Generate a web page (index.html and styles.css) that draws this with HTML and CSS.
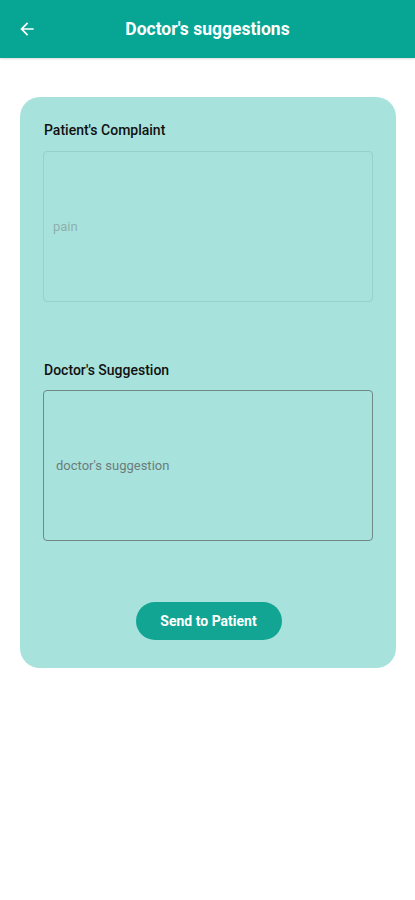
FILE: index.html
```html
<!DOCTYPE html>
<html lang="en">
<head>
    <meta charset="UTF-8">
    <meta name="viewport" content="width=device-width, initial-scale=1.0">
    <title>Doctor's suggestions</title>
    <link rel="stylesheet" href="styles.css">
</head>
<body>
    <header class="app-bar">
        <button class="back-btn" aria-label="Back">
            <svg width="20" height="20" viewBox="0 0 24 24"><path d="M20 11H7.83l5.59-5.59L12 4l-8 8 8 8 1.41-1.41L7.83 13H20v-2z" fill="#fff"/></svg>
        </button>
        <h1>Doctor's suggestions</h1>
    </header>
    <main>
        <section class="card">
            <h2>Patient's Complaint</h2>
            <div class="field field-disabled">pain</div>

            <h2 class="second">Doctor's Suggestion</h2>
            <textarea class="field field-input" placeholder="doctor's suggestion"></textarea>

            <div class="button-container">
                <button class="send-btn">Send to Patient</button>
            </div>
        </section>
    </main>
</body>
</html>
```

FILE: styles.css
```css
body {
    font-family: Roboto, "Noto Sans", sans-serif;
    margin: 0;
    padding: 0;
    background-color: #ffffff;
}

.app-bar {
    height: 58px;
    background-color: #07a593;
    display: flex;
    align-items: center;
    position: relative;
    box-shadow: 0 1px 2px rgba(0, 0, 0, 0.15);
}

.back-btn {
    background: none;
    border: none;
    padding: 0;
    margin-left: 17px;
    width: 20px;
    height: 20px;
    display: flex;
    cursor: pointer;
}

.app-bar h1 {
    position: absolute;
    left: 0;
    right: 0;
    margin: 0;
    text-align: center;
    color: #ffffff;
    font-size: 17.5px;
    font-weight: 700;
    pointer-events: none;
}

main {
    padding: 39px 19px 0 20px;
}

.card {
    background-color: #a8e2dc;
    border-radius: 20px;
    padding: 25px 23px 28px 23px;
}

.card h2 {
    margin: 0 0 13px 1px;
    font-size: 14px;
    font-weight: 500;
    color: #111;
}

.card h2.second {
    margin-top: 60px;
    margin-bottom: 12px;
}

.field {
    box-sizing: border-box;
    display: block;
    width: 100%;
    height: 151px;
    border-radius: 4px;
    font-family: Roboto, "Noto Sans", sans-serif;
    font-size: 13px;
    background: transparent;
}

.field-disabled {
    border: 1px solid #93d3cc;
    color: #8fb0ac;
    padding: 0 9px;
    display: flex;
    align-items: center;
}

.field-input {
    border: 1px solid #6f8986;
    padding: 0 12px;
    padding-top: 67px;
    resize: none;
    color: #333;
    outline: none;
}

.field-input::placeholder {
    color: #6c7c7a;
}

.button-container {
    display: flex;
    justify-content: center;
    margin-top: 61px;
}

.send-btn {
    width: 146px;
    height: 38px;
    border-radius: 19px;
    border: none;
    background-color: #13a593;
    color: #ffffff;
    font-family: Roboto, "Noto Sans", sans-serif;
    font-size: 14px;
    font-weight: 700;
    cursor: pointer;
    margin-left: 1px;
}
```
